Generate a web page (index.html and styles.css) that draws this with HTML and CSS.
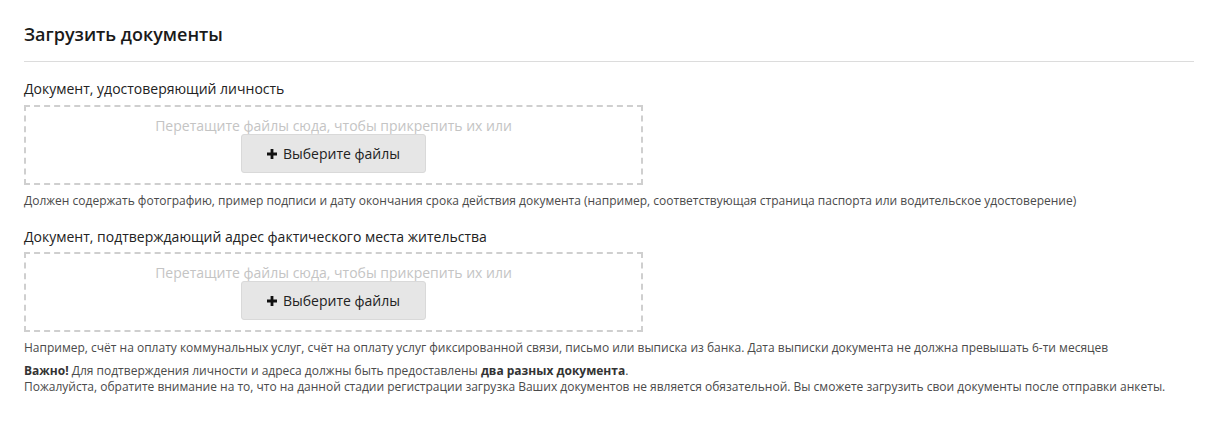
FILE: index.html
```html
<!DOCTYPE html>
<html lang="ru">
<head>
<meta charset="utf-8">
<title>Загрузить документы</title>
<link rel="stylesheet" href="styles.css">
</head>
<body>
<div class="page">
  <h2 class="title">Загрузить документы</h2>
  <div class="rule"></div>

  <div class="field first">
    <div class="label">Документ, удостоверяющий личность</div>
    <div class="dropzone">
      <div class="hint">Перетащите файлы сюда, чтобы прикрепить их или</div>
      <button class="pick" type="button"><svg class="plus" width="10" height="10" viewBox="0 0 10 10"><path d="M3.6 0h2.8v3.6H10v2.8H6.4V10H3.6V6.4H0V3.6h3.6z" fill="#111"/></svg>Выберите файлы</button>
    </div>
    <div class="help">Должен содержать фотографию, пример подписи и дату окончания срока действия документа (например, соответствующая страница паспорта или водительское удостоверение)</div>
  </div>

  <div class="field second">
    <div class="label">Документ, подтверждающий адрес фактического места жительства</div>
    <div class="dropzone">
      <div class="hint">Перетащите файлы сюда, чтобы прикрепить их или</div>
      <button class="pick" type="button"><svg class="plus" width="10" height="10" viewBox="0 0 10 10"><path d="M3.6 0h2.8v3.6H10v2.8H6.4V10H3.6V6.4H0V3.6h3.6z" fill="#111"/></svg>Выберите файлы</button>
    </div>
    <div class="help">Например, счёт на оплату коммунальных услуг, счёт на оплату услуг фиксированной связи, письмо или выписка из банка. Дата выписки документа не должна превышать 6-ти месяцев</div>
  </div>

  <div class="note">
    <div><b>Важно!</b> Для подтверждения личности и адреса должны быть предоставлены <b>два разных документа</b>.</div>
    <div>Пожалуйста, обратите внимание на то, что на данной стадии регистрации загрузка Ваших документов не является обязательной. Вы сможете загрузить свои документы после отправки анкеты.</div>
  </div>
</div>
</body>
</html>
```
FILE: styles.css
```css
html, body {
  margin: 0;
  padding: 0;
  background: #fff;
}
body {
  font-family: "Open Sans", "Noto Sans", sans-serif;
  color: #333;
}
.page {
  padding: 22px 20px 0 24px;
}
.title {
  margin: 0;
  font-size: 18px;
  line-height: 24px;
  font-weight: 600;
  color: #1a1a1a;
}
.rule {
  height: 1px;
  background: #dcdcdc;
  margin-top: 15px;
}
.field.first {
  margin-top: 17px;
}
.field.second {
  margin-top: 18px;
}
.label {
  font-size: 14px;
  line-height: 20px;
  color: #222;
}
.dropzone {
  width: 615px;
  height: 76px;
  border: 2px dashed #cfcfcf;
  margin-top: 6px;
  display: flex;
  flex-direction: column;
  align-items: center;
  box-sizing: content-box;
}
.second .dropzone {
  margin-top: 5px;
}
.hint {
  font-size: 14px;
  line-height: 16px;
  margin-top: 11px;
  color: #c4c4c4;
}
.pick {
  width: 185px;
  height: 39px;
  margin-top: 0;
  background: #e6e6e6;
  border: 1px solid #d9d9d9;
  border-radius: 3px;
  font-family: inherit;
  font-size: 14px;
  color: #222;
  display: flex;
  align-items: center;
  justify-content: center;
  gap: 6px;
  padding: 0;
}
.plus {
  display: block;
}
.help {
  margin-top: 8px;
  font-size: 12px;
  line-height: 16px;
  color: #4a4a4a;
}
.note {
  margin-top: 7px;
  font-size: 12px;
  line-height: 16px;
  color: #4a4a4a;
}
.note b {
  font-weight: 700;
  color: #333;
}
```
